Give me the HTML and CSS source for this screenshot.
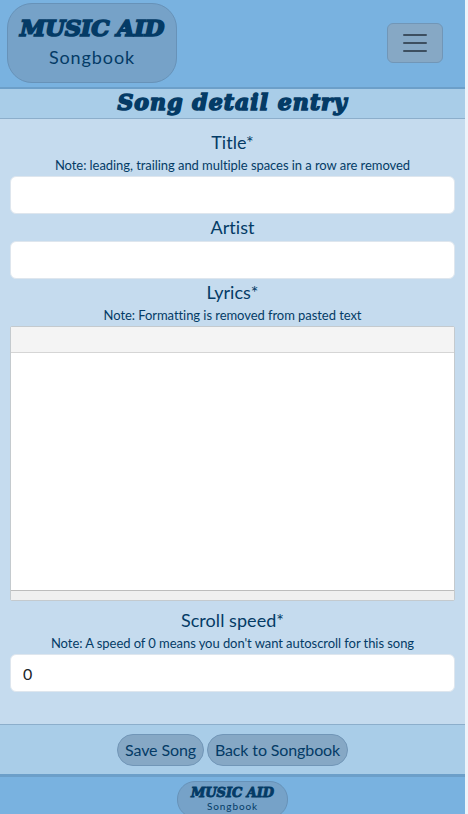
FILE: index.html
```html
<!DOCTYPE html>
<html lang="en">
<head>
<meta charset="utf-8">
<title>Music Aid Songbook</title>
<link rel="stylesheet" href="styles.css">
</head>
<body>
<div class="page">
  <header class="header">
    <a class="brand"><span class="brand-name">MUSIC AID</span><span class="brand-sub">Songbook</span></a>
    <button class="menu" aria-label="Menu"><svg width="30" height="30" viewBox="0 0 30 30"><path d="M4 7h22M4 15h22M4 23h22" stroke="#3d4f60" stroke-width="2" stroke-linecap="round"/></svg></button>
  </header>
  <div class="title-bar"><h1>Song detail entry</h1></div>
  <main class="form">
    <label class="label">Title*</label>
    <div class="note">Note: leading, trailing and multiple spaces in a row are removed</div>
    <input class="field" type="text">
    <label class="label">Artist</label>
    <input class="field" type="text">
    <label class="label">Lyrics*</label>
    <div class="note">Note: Formatting is removed from pasted text</div>
    <div class="editor"><div class="toolbar"></div><div class="content"></div><div class="status"></div></div>
    <label class="label">Scroll speed*</label>
    <div class="note">Note: A speed of 0 means you don't want autoscroll for this song</div>
    <input class="field" type="text" value="0">
  </main>
  <div class="actions"><button class="pill save">Save Song</button><button class="pill back">Back to Songbook</button></div>
  <footer class="footer">
    <a class="brand small"><span class="brand-name">MUSIC AID</span><span class="brand-sub">Songbook</span></a>
  </footer>
</div>
</body>
</html>
```

FILE: styles.css
```css
* { box-sizing: border-box; }
body { margin: 0; background: #edf3fa; font-family: Lato, sans-serif; color: #043b66; height: 814px; overflow: hidden; }
.page { width: 465px; height: 814px; display: flex; flex-direction: column; overflow: hidden; background: #c5dbee; }
.header { height: 89px; flex: none; display: flex; justify-content: space-between; align-items: flex-start; padding: 3px 22px 0 7px; background: #79b2e0; border-bottom: 2px solid #6c9fc9; }
.brand { width: 170px; height: 80px; display: flex; flex-direction: column; align-items: center; background: #76a2c8; border: 1px solid #6792b8; border-radius: 25px; }
.brand-name { font: italic bold 23px/26px "DejaVu Serif", serif; letter-spacing: -0.4px; -webkit-text-stroke: 1.7px #043b66; margin-top: 11px; white-space: nowrap; }
.brand-sub { font-size: 18px; line-height: 24px; letter-spacing: 0.9px; margin-top: 4px; }
.menu { width: 56px; height: 40px; margin-top: 20px; padding: 0; display: flex; align-items: center; justify-content: center; background: #86a8c5; border: 1px solid #7196b7; border-radius: 6px; }
.title-bar { height: 30px; flex: none; text-align: center; background: #a9cde8; border-bottom: 1px solid #8caecb; }
h1 { margin: 0; font: italic bold 22px/26px "DejaVu Serif", serif; letter-spacing: 1.05px; -webkit-text-stroke: 1.6px #043b66; white-space: nowrap; }
.form { height: 605px; flex: none; padding: 10px 10px 0; display: flex; flex-direction: column; }
.label { height: 27px; line-height: 27px; font-size: 18px; letter-spacing: 0.05px; text-align: center; }
.note { height: 20px; line-height: 19px; font-size: 13px; letter-spacing: -0.06px; text-align: center; white-space: nowrap; }
.field { display: block; width: 445px; height: 38px; border: 1px solid #dee6ee; border-radius: 6px; background: #fff; padding: 0 12px; font: 16px Lato, sans-serif; color: #212529; outline: none; }
.editor { height: 275px; margin-bottom: 6px; display: flex; flex-direction: column; border: 1px solid #c4cace; border-radius: 2px; background: #fff; }
.toolbar { height: 26px; background: #f4f4f4; border-bottom: 1px solid #d5d5d5; }
.content { flex: 1; }
.status { height: 10px; background: #f0f0f0; border-top: 1px solid #bdbdbd; }
.actions { height: 53px; flex: none; padding-top: 9px; display: flex; justify-content: center; gap: 3px; background: #a9cde8; border-top: 1px solid #8caecb; border-bottom: 3px solid #6c9fc9; }
.pill { height: 32px; padding: 0 0 1px; font: 16px Lato, sans-serif; letter-spacing: -0.12px; color: #043b66; background: #86a8c5; border: 1px solid #7196b7; border-radius: 16px; white-space: nowrap; }
.save { width: 87px; }
.back { width: 141px; }
.footer { flex: 1; display: flex; justify-content: center; align-items: flex-start; padding-top: 4px; background: #79b2e0; }
.small { width: 111px; height: 37px; flex: none; border-radius: 18px; }
.small .brand-name { font-size: 13px; line-height: 14px; margin-top: 4px; letter-spacing: -0.05px; -webkit-text-stroke-width: 0.9px; }
.small .brand-sub { font-size: 10px; line-height: 12px; margin-top: 0; }
```
